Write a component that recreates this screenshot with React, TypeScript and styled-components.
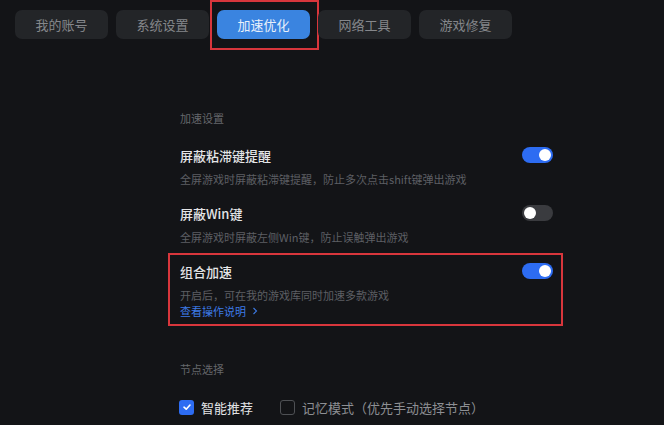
import styled, { createGlobalStyle } from 'styled-components';

const GlobalStyle = createGlobalStyle`
  html, body {
    margin: 0;
    padding: 0;
    background: #131417;
  }
  body {
    font-family: 'Noto Sans CJK SC', 'Noto Sans', sans-serif;
    width: 664px;
    height: 425px;
    overflow: hidden;
  }
`;

const tabs = ['我的账号', '系统设置', '加速优化', '网络工具', '游戏修复'];

const options = [
  {
    title: '屏蔽粘滞键提醒',
    desc: '全屏游戏时屏蔽粘滞键提醒，防止多次点击shift键弹出游戏',
    on: true,
  },
  {
    title: '屏蔽Win键',
    desc: '全屏游戏时屏蔽左侧Win键，防止误触弹出游戏',
    on: false,
  },
  {
    title: '组合加速',
    desc: '开启后，可在我的游戏库同时加速多款游戏',
    on: true,
    link: '查看操作说明',
    marked: true,
  },
];

const App = () => {
  return (
    <Page>
      <GlobalStyle />
      <TabBar>
        {tabs.map((t, i) => (
          <Tab key={t} $active={i === 2}>
            {t}
          </Tab>
        ))}
      </TabBar>

      <Content>
        <SectionLabel>加速设置</SectionLabel>
        <OptionList>
          {options.map((o) => (
            <Option key={o.title} $marked={o.marked}>
              <OptionHead>
                <OptionTitle>{o.title}</OptionTitle>
                <Toggle $on={o.on} />
              </OptionHead>
              <OptionDesc>{o.desc}</OptionDesc>
              {o.link && (
                <Link>
                  {o.link}
                  <svg width='8' height='8' viewBox='0 0 8 8'>
                    <path d='M2.5 1 L5.5 4 L2.5 7' fill='none' stroke='currentColor' strokeWidth='1.1' />
                  </svg>
                </Link>
              )}
            </Option>
          ))}
        </OptionList>

        <SectionLabel $gap>节点选择</SectionLabel>
        <CheckRow>
          <CheckItem>
            <Box $checked>
              <svg width='10' height='10' viewBox='0 0 10 10'>
                <path d='M2 5.2 L4.2 7.2 L8 3' fill='none' stroke='#fff' strokeWidth='1.6' strokeLinecap='round' strokeLinejoin='round' />
              </svg>
            </Box>
            <CheckText $checked>智能推荐</CheckText>
          </CheckItem>
          <CheckItem>
            <Box />
            <CheckText>记忆模式（优先手动选择节点）</CheckText>
          </CheckItem>
        </CheckRow>
      </Content>
    </Page>
  );
};

const Page = styled.div`
  width: 664px;
  height: 425px;
  background: #131417;
`;

const TabBar = styled.div`
  display: flex;
  gap: 8px;
  padding: 10px 0 0 15px;
`;

const Tab = styled.div<{ $active?: boolean }>`
  position: relative;
  width: 93px;
  height: 29px;
  border-radius: 7px;
  display: flex;
  align-items: center;
  justify-content: center;
  font-size: 13px;
  background: ${(p) => (p.$active ? '#3a84e0' : '#232528')};
  color: ${(p) => (p.$active ? '#e8f0fb' : '#85878b')};

  ${(p) =>
    p.$active &&
    `
    &::after {
      content: '';
      position: absolute;
      top: -10px;
      bottom: -11px;
      left: -7px;
      right: -9px;
      border: 2px solid #d8363c;
    }
  `}
`;

const Content = styled.div`
  width: 373px;
  margin: 71px 0 0 180px;
`;

const SectionLabel = styled.div<{ $gap?: boolean }>`
  font-size: 11px;
  line-height: 16px;
  color: #65676b;
  margin-top: ${(p) => (p.$gap ? '42px' : '0')};
`;

const OptionList = styled.div`
  display: flex;
  flex-direction: column;
  gap: 16px;
  margin-top: 19px;
`;

const Option = styled.div<{ $marked?: boolean }>`
  position: relative;

  ${(p) =>
    p.$marked &&
    `
    &::after {
      content: '';
      position: absolute;
      top: -8px;
      bottom: -7px;
      left: -12px;
      right: -10px;
      border: 2px solid #d8363c;
    }
  `}
`;

const OptionHead = styled.div`
  display: flex;
  align-items: center;
  justify-content: space-between;
  height: 20px;
`;

const OptionTitle = styled.div`
  font-size: 13px;
  font-weight: 500;
  color: #e4e5e7;
`;

const Toggle = styled.div<{ $on?: boolean }>`
  position: relative;
  width: 31px;
  height: 16px;
  border-radius: 8px;
  background: ${(p) => (p.$on ? '#2d6cf2' : '#3a3b3f')};

  &::after {
    content: '';
    position: absolute;
    top: 2px;
    left: ${(p) => (p.$on ? '17px' : '2px')};
    width: 12px;
    height: 12px;
    border-radius: 50%;
    background: #ffffff;
  }
`;

const OptionDesc = styled.div`
  margin-top: 6px;
  font-size: 11px;
  line-height: 16px;
  color: #5d5f64;
`;

const Link = styled.div`
  display: flex;
  align-items: center;
  gap: 5px;
  font-size: 11px;
  line-height: 16px;
  color: #3d7be6;
`;

const CheckRow = styled.div`
  display: flex;
  align-items: center;
  gap: 27px;
  margin-top: 20px;
  height: 20px;
  margin-left: -1px;
`;

const CheckItem = styled.div`
  display: flex;
  align-items: center;
  gap: 7px;
`;

const Box = styled.div<{ $checked?: boolean }>`
  width: 15px;
  height: 15px;
  box-sizing: border-box;
  border-radius: 3px;
  display: flex;
  align-items: center;
  justify-content: center;
  background: ${(p) => (p.$checked ? '#2d6cf2' : 'transparent')};
  border: ${(p) => (p.$checked ? 'none' : '1.5px solid #4e5054')};
`;

const CheckText = styled.span<{ $checked?: boolean }>`
  font-size: 13px;
  color: ${(p) => (p.$checked ? '#e4e5e7' : '#8d8f93')};
`;

export default App;
